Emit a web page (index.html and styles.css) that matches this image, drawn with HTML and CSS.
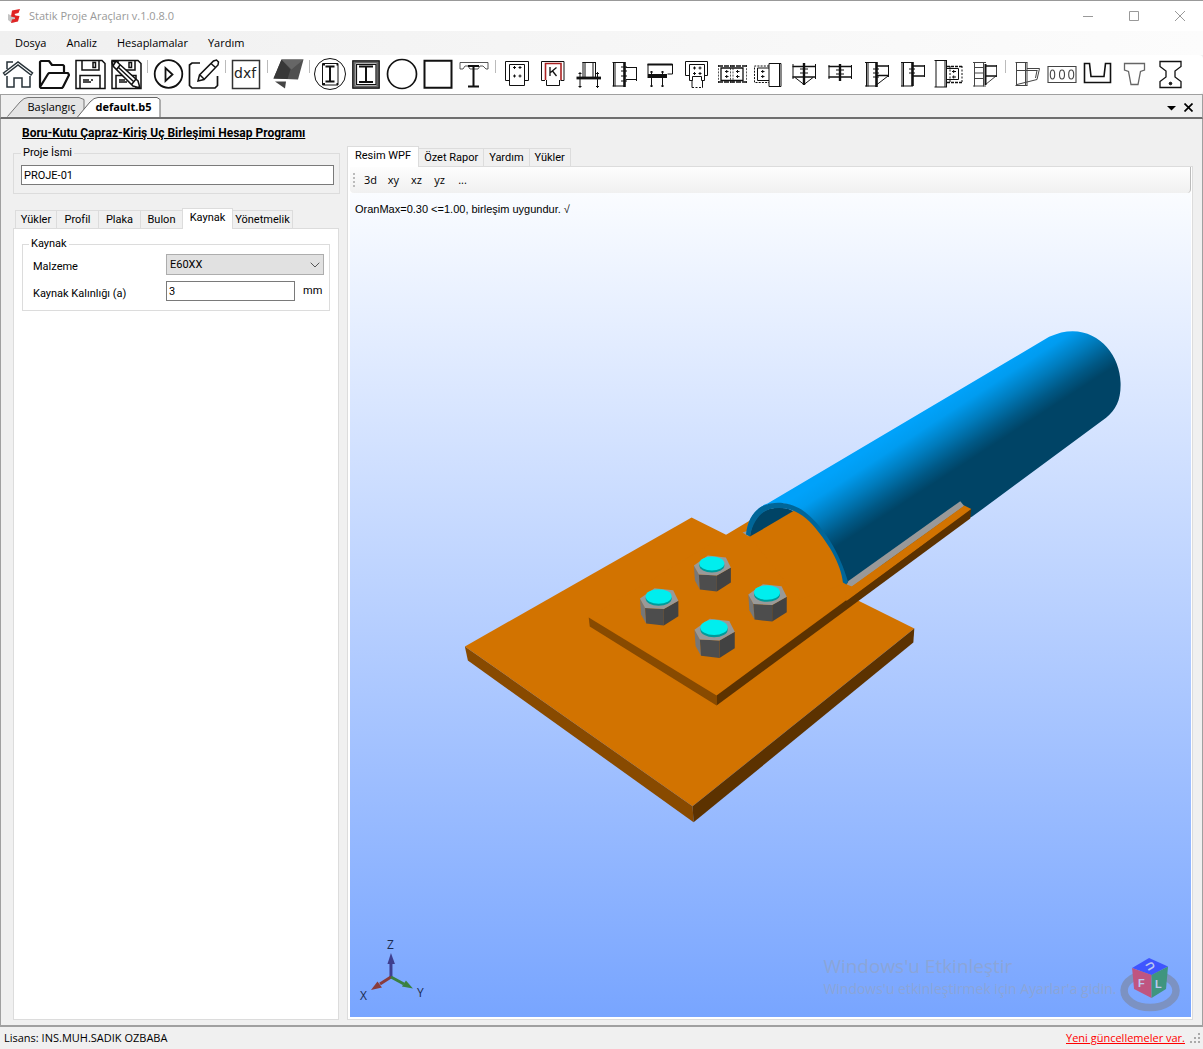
FILE: index.html
```
<!DOCTYPE html>
<html lang="tr">
<head>
<meta charset="utf-8">
<title>Statik Proje Araçları v.1.0.8.0</title>
<link rel="stylesheet" href="styles.css">
</head>
<body>
<div class="window">
  <header class="titlebar">
    <svg class="logo" width="16" height="16" viewBox="0 0 16 16"><path d="M2 6v6l4 3 3-1V9z" fill="#c4c4c4"/><path d="M6 2.500L14 1l-1.500 4-4 1 1 1.500 4 .5-1.500 5.500L5 15l1-3.500 3-.5v-1.500L5 8.500z" fill="#e02424"/></svg>
    <span class="caption">Statik Proje Araçları v.1.0.8.0</span>
    <button class="winbtn" aria-label="Simge durumuna küçült"><svg width="12" height="12" viewBox="0 0 12 12"><path d="M1 6.500h10"/></svg></button>
    <button class="winbtn" aria-label="Ekranı kapla"><svg width="12" height="12" viewBox="0 0 12 12"><path d="M1.500 1.500h9v9h-9z"/></svg></button>
    <button class="winbtn" aria-label="Kapat"><svg width="12" height="12" viewBox="0 0 12 12"><path d="M1 1l10 10M11 1L1 11"/></svg></button>
  </header>

  <nav class="menubar">
    <button>Dosya</button><button>Analiz</button><button>Hesaplamalar</button><button>Yardım</button>
  </nav>

  <div class="toolbar">
    <button aria-label="Ana sayfa"><svg viewBox="0 0 36 36"><g stroke="#273238" stroke-width="1.500"><path d="M3.500 17L18 6l14.500 11-1.500 2L18 9 5 19zM7 13V6h6M7 20v11h7v-9h8v9h8V20"/></g></svg></button>
    <button aria-label="Aç"><svg viewBox="0 0 36 36"><path stroke-width="2.200" stroke-linejoin="round" d="M4 31V6l1-1h8l3 4h11l1 1v7M4 31l8-13 1-1h19l1 2-6 12-1 1H5z"/></svg></button>
    <button aria-label="Kaydet"><svg viewBox="0 0 36 36"><path stroke-width="1.500" d="M4 4.500h26l3 3V32.500H4zM10 5v9h17V5M21 6.500h2.500v5H21zM8 32V19.500h20V32M11 24h6M19 24h2M11 26h8"/></svg></button>
    <button aria-label="Farklı kaydet"><svg viewBox="0 0 36 36"><path stroke-width="1.500" d="M4 4.500h26l3 3V32.500H4zM10 5v9h17V5M21 6.500h2.500v5H21zM8 32V19.500h20V32M11 24h6M11 26h8"/><path fill="#fff" stroke-width="1.500" d="M4 6l4-1 22 20 2 7-7-2L5 10zM8 5l-3 5M12 9l-3 4M28 23l-4 5M10 11l16 15M30 31l2 1"/></svg></button>
    <span class="sep"></span>
    <button aria-label="Hesapla"><svg viewBox="0 0 36 36"><circle cx="18.500" cy="18" r="13.800" stroke-width="1.800"/><path stroke-width="1.800" d="M15.500 12v13l7-6.500z"/></svg></button>
    <button aria-label="Düzenle"><svg viewBox="0 0 36 36"><path stroke-width="1.700" d="M14 7H6L3.500 9v20.500L6 32h23l2.500-2.500V20"/><path stroke-width="1.500" d="M12 25l1.500-6L27.500 5l3-1 2 2-.5 3L18 23.500zM25 7.500l4.500 4M14 19l4 4"/></svg></button>
    <span class="sep"></span>
    <button aria-label="DXF"><svg viewBox="0 0 36 36"><path stroke="#333" stroke-width="1.500" d="M4.500 4.500h27v28h-27z"/><text x="6" y="22" class="dxf">dxf</text></svg></button>
    <span class="sep"></span>
    <button aria-label="3B görünüm"><svg viewBox="0 0 36 36"><g stroke="none"><path fill="#505050" d="M11.500 3.500H33.500l-5.500 20-24.500-1z"/><path fill="#383838" d="M11.500 3.500l9 10-3 9.500-14-.5z"/><path fill="#666" d="M11.500 3.500H33.500l-12 10z"/><path fill="#444" d="M5 25.500h11l-1 7z"/></g></svg></button>
    <span class="sep"></span>
    <button aria-label="Daire kesitte I profil"><svg viewBox="0 0 36 36"><circle cx="18" cy="18" r="15.500"/><path d="M10.500 7.500h15.500v21.500H10.500z"/><path stroke-width="2" d="M13.500 10.500h9M18 10.500v15M13.500 25.500h9"/><path stroke-width="2" stroke-dasharray="2 11.500" d="M11 8.500h15M11 28h15"/></svg></button>
    <button aria-label="Kare kesitte I profil"><svg viewBox="0 0 36 36"><path stroke="#666" stroke-width="3" d="M6 6h24v25H6z"/><path stroke-width="1.200" d="M4.800 4.800h26.400v27.400H4.800zM8.500 8.500h19.500v20H8.500z"/><path stroke-width="2" d="M11 10.500h14M18 10.500v16M11 26h14"/></svg></button>
    <button aria-label="Daire kesit"><svg viewBox="0 0 36 36"><circle cx="18" cy="18" r="14.500" stroke-width="1.700"/></svg></button>
    <button aria-label="Kare kesit"><svg viewBox="0 0 36 36"><path stroke-width="2" d="M4.500 4.800h27v27h-27z"/></svg></button>
    <button aria-label="Kompozit kiriş"><svg viewBox="0 0 36 36"><path d="M4 13V6.500h28V13h-2l-3-3h-3l-2 3h-8l-2-3H9l-2 3z" stroke="#444" stroke-width=".9"/><path stroke-width="2" d="M12 10h11M17.500 9v21M12 30.500h11"/></svg></button>
    <span class="sep"></span>
    <button aria-label="Birleşim 1"><svg viewBox="0 0 36 36"><path d="M11 24.500H7.500V5.500H30.500v19H26.500"/><path d="M11.500 8.500h15v21h-15z"/><path class="b" d="M15 11.500h3M20.500 11.500h3M15 20h3M20.500 20h3M16.500 10v3M22 10v3M16.500 18.500v3M22 18.500v3"/></svg></button>
    <button aria-label="Birleşim 2"><svg viewBox="0 0 36 36"><path d="M11 24.500H7.500V5.500H30v19H26.500"/><path stroke="#a22" d="M11.500 24V7.500H27V24" stroke-width="1.600"/><path d="M12.500 24v5.500h13V24"/><path d="M16 11v9M22.500 11.500l-6 5M18.500 15l4 5" stroke-width="1.300"/></svg></button>
    <button aria-label="Kolon ayağı"><svg viewBox="0 0 36 36"><path d="M13 6v15M15 6v15M23 6v15M25.500 6v15M12.500 6.500h13M10 16v16M27.500 16v16M8.500 17.500h3M26 17.500h3M8.500 30.500h3M26 30.500h3"/><path stroke-width="2.800" d="M6.500 22h24.500"/></svg></button>
    <button aria-label="Kolon kiriş"><svg viewBox="0 0 36 36"><path d="M7.500 6.500v24M9 6.500v24M6.500 6.500h12M6.500 30h12M20 11.500h11M20 23.500h11M30.500 11v14M15 11h6M15 15h6M15 20h6M15 25h6"/><path stroke-width="2.600" d="M18.500 6v25"/></svg></button>
    <button aria-label="Kiriş mesnedi"><svg viewBox="0 0 36 36"><path d="M6 8v14M30.500 8v10h-5M9.500 15v16M20.500 15v16M8 16h3M19 16h3M8 30h3M19 30h3"/><path stroke-width="2" d="M5.500 8.500h25"/><path stroke-width="4" d="M6 20h19"/></svg></button>
    <button aria-label="Birleşim 3"><svg viewBox="0 0 36 36"><path d="M11 19.500H7.500V5.500H29.500v14H26.500M11.500 8.500h15v16h-3v-4h-9v4h-3zM14 24v7.500M24.500 24v7.500"/><path stroke-dasharray="2 1.500" d="M14 31.500h11"/><path class="b" d="M15 12h3M20.500 12h3M15 17.500h3M20.500 17.500h3M16.500 10.500v3M22 10.500v3M16.500 16v3M22 16v3"/></svg></button>
    <button aria-label="Birleşim 4"><svg viewBox="0 0 36 36"><g stroke-dasharray="2 1.200" stroke="#555"><path d="M4.500 9v18M32.500 9v18M16.500 9v18M19 9v18"/></g><path stroke-width="1.500" stroke-dasharray="5 1" d="M4 10h29M4 26h29"/><path stroke-width="1.300" d="M7 12h22v12.500H7z"/><path class="b" d="M11 15.500h3.500M22 15.500h3.500M11 20.500h3.500M22 20.500h3.500M12.700 14v3M23.500 14v3M12.700 19v3M23.500 19v3"/></svg></button>
    <button aria-label="Birleşim 5"><svg viewBox="0 0 36 36"><path stroke-dasharray="2 1.200" d="M19 10H4.500v16.500H19"/><path d="M19 12H7.500v12.500H19M19 7.500h12v23H19zM29.500 7.500v23"/><path class="b" d="M11 15.500h3.500M11 20.500h3.500M12.700 14v3M12.700 19v3"/></svg></button>
    <button aria-label="Kiriş eki 1"><svg viewBox="0 0 36 36"><path d="M7 8v15M29.500 8v15M9 21.500l9 7 9-7M14 13h8M14 17h8"/><path stroke-width="1.500" d="M6.500 10.500h23M6.500 21h23"/><path stroke-width="2.400" d="M18 7v22"/></svg></button>
    <button aria-label="Kiriş eki 2"><svg viewBox="0 0 36 36"><path d="M7 9v14M29.500 9v14M14 14h8M14 18h8"/><path stroke-width="1.500" d="M6.500 10.500h23M6.500 21h23"/><path stroke-width="2.400" d="M18 8v17"/></svg></button>
    <button aria-label="Kolon kiriş 2"><svg viewBox="0 0 36 36"><path d="M8.500 6.500v24M10 6.500v24M7 6.500h12M7 30h12M30.500 9v12M19 28.500L30 20M15 13h6M15 17h6M15 21h6"/><path stroke-width="1.500" d="M19 10h12M19 19.500h12"/><path stroke-width="2.600" d="M18.500 6v25"/></svg></button>
    <button aria-label="Kolon kiriş 3"><svg viewBox="0 0 36 36"><path d="M8 6.500v24M9.500 6.500v24M7 6.500h12M7 30h12M30.500 9v12M15 13h6M15 17h6"/><path stroke-width="1.500" d="M19 10h12M19 20h12"/><path stroke-width="2.600" d="M18.500 6v24"/></svg></button>
    <button aria-label="Kolon kiriş 4"><svg viewBox="0 0 36 36"><path d="M6 5v26M15 5v26M16.500 5v26M4.500 4.500h12.500M4.500 31h12.500M17 12.500h11.500v11H17"/><path stroke-width="1.500" stroke-dasharray="3 1" d="M17 10.500h15.500M17 26.500h15.500"/><path stroke-dasharray="2 1.500" d="M32 10v17M20 10v17"/><path class="b" d="M22 15.500h4M22 21h4M23.700 14v3M23.700 19.500v3"/></svg></button>
    <button aria-label="Kolon kiriş 5"><svg viewBox="0 0 36 36"><path stroke="#444" d="M8.500 6.500v24M17.500 6.500v24M7 6.500h13M7 30h13M8 11.500h10M8 17h10M8 22.500h10M30.500 9v12M19.500 28.500L30 20"/><path stroke-width="1.500" d="M19 10h12M19 20h12"/><path stroke-width="2" d="M19.500 8v21"/></svg></button>
    <span class="sep"></span>
    <button aria-label="Konsol"><svg viewBox="0 0 36 36"><g stroke="#444"><path d="M8.500 6.500v23M17.500 6.500v23M19 6.500v23M7.500 6.500h12M7.500 29.500h12M19 12.500h12.500L29 23.500 9 28.500M9 14.500h20.500M29 14.500l-1.500 7.500"/></g></svg></button>
    <button aria-label="Boşluklu döşeme"><svg viewBox="0 0 36 36"><g stroke="#444" stroke-width="1.100"><path d="M4 10.500h28v16H4z"/><ellipse cx="8.500" cy="18.500" rx="2.200" ry="4.500"/><ellipse cx="18" cy="18.500" rx="2.500" ry="4.500"/><ellipse cx="27.200" cy="18.500" rx="2.500" ry="4.500"/></g></svg></button>
    <button aria-label="U kesit"><svg viewBox="0 0 36 36"><path stroke-width="1.600" d="M4.500 26.500V7.500h5l1.500 13h13l1.500-13h5v19z"/></svg></button>
    <button aria-label="T kesit"><svg viewBox="0 0 36 36"><path stroke="#666" stroke-width="1.300" d="M8.500 7.500h20V14l-4 1.500-2.500 13h-7l-2.500-13-4-1.500z"/></svg></button>
    <button aria-label="I kesit"><svg viewBox="0 0 36 36"><path stroke-width="1.300" d="M8 5.500h21v5L23 15v6l6 4.500v6H8v-6L14 21v-6l-6-4.500z"/><circle cx="18.500" cy="27.500" r="1.300" fill="#111"/></svg></button>
  </div>

  <div class="doctabs">
    <button class="doctab"><svg viewBox="0 0 80 20" width="80" height="20"><path d="M.5 19.500L13 5q4-4.500 8-4.500h51l5 2v17" fill="#e4e4e4" stroke="#777"/></svg><span>Başlangıç</span></button>
    <button class="doctab current"><svg viewBox="0 0 84 20" width="84" height="20"><path d="M.5 20L13 5q4-4.500 8-4.500h59l3 2V20" fill="#fff" stroke="#666"/></svg><span>default.b5</span></button>
    <button class="docctl" aria-label="Sekme listesi"><svg width="9" height="9" viewBox="0 0 9 9"><path d="M0 3h9L4.500 7.500z"/></svg></button>
    <button class="docctl" aria-label="Sekmeyi kapat"><svg width="9" height="9" viewBox="0 0 9 9"><path d="M.5 .5l8 8M8.500 .5l-8 8" stroke="#000" stroke-width="1.700"/></svg></button>
  </div>

  <main class="content">
    <section class="side">
      <h1>Boru-Kutu Çapraz-Kiriş Uç Birleşimi Hesap Programı</h1>
      <fieldset class="group project">
        <legend><label for="proje">Proje İsmi</label></legend>
        <input id="proje" type="text" value="PROJE-01">
      </fieldset>
      <div class="tabs sidetabs">
        <button>Yükler</button><button>Profil</button><button>Plaka</button><button>Bulon</button><button class="on">Kaynak</button><button>Yönetmelik</button>
      </div>
      <div class="pane">
        <fieldset class="group weld">
          <legend>Kaynak</legend>
          <label for="malzeme">Malzeme</label>
          <div class="combo"><select id="malzeme"><option>E60XX</option><option>E70XX</option></select><svg width="10" height="6" viewBox="0 0 10 6"><path d="M.7 .7L5 5 9.300 .7"/></svg></div>
          <label for="kalinlik">Kaynak Kalınlığı (a)</label>
          <div class="measure"><input id="kalinlik" type="text" value="3"><span>mm</span></div>
        </fieldset>
      </div>
    </section>

    <section class="work">
      <div class="tabs worktabs">
        <button class="on">Resim WPF</button><button>Özet Rapor</button><button>Yardım</button><button>Yükler</button>
      </div>
      <div class="viewer">
        <div class="strip"><i class="grip"></i><button>3d</button><button>xy</button><button>xz</button><button>yz</button><button>...</button></div>
        <div class="stage">
          <p class="result">OranMax=0.30 &lt;=1.00, birleşim uygundur. √</p>
          <svg class="scene" viewBox="351 193 840 825" preserveAspectRatio="xMidYMid meet">
            <defs>
              <linearGradient id="pipe" gradientUnits="userSpaceOnUse" x1="896" y1="432" x2="931" y2="486">
                <stop offset="0" stop-color="#00a2fa"/><stop offset=".2" stop-color="#009cf0"/><stop offset=".5" stop-color="#007cbd"/><stop offset=".8" stop-color="#005885"/><stop offset="1" stop-color="#004466"/>
              </linearGradient>
              <g id="nut">
                <path d="M-18 2l1 15 5 9-1-15z" fill="#777"/><path d="M-13 11l1 15 17 2V12z" fill="#4d4d4d"/><path d="M5 12v16l14-9V4z" fill="#424242"/>
                <path d="M-4-8l18 2 5 10-14 8-18-1-5-9z" fill="#999"/><ellipse cy="2" rx="12.500" ry="7" fill="#009a9a"/><ellipse rx="12.500" ry="7" fill="#00eeee"/>
              </g>
            </defs>
            <path fill="#d27300" d="M465 647L692 518l223 111-222 178z"/>
            <path fill="#884a00" d="M465 647l3 14 226 162-1-16z"/>
            <path fill="#5c3200" d="M693 807l1 16 220-180 1-14z"/>
            <path fill="#d27300" d="M589 618l138-83 25-15 208-10 12-1-255 187z"/>
            <path fill="#884a00" d="M589 618l1 9 127 79v-10z"/>
            <path fill="#999" d="M743 533l6-2v6z"/>
            <path fill="url(#pipe)" d="M747 535C748 518 758 507 768 504L1050 337C1090 318 1121 350 1121.500 383C1122 400 1117 410 1107 418L973 517 848 584C838 555 823 530 810 517C793 503 780 502 768 505z"/>
            <path fill="#d27300" d="M750 537L797 509C818 520 838 550 846 584L800 600z"/>
            <path fill="#004466" d="M750.500 537C752 522 760 512 770 509.500Q783 506 794 511.500z"/>
            <path fill="#006699" d="M746.500 535C748 518 757 508 766 505.500C776 501 791 503 802 510C824 525 841 555 848.500 582L847 585 843.500 583C842 565 828 541 810 522C799 511 785 506 771 509.500C761 512 753 522 750.500 537z"/>
            <path fill="#5c3200" d="M717 696v10l254-187 1-10z"/>
            <path fill="#999" d="M849 581.500L961 501.500l4 5-112.500 80.500-5-2z"/>
            <path fill="#d27300" d="M845 588l7.500-1L965 506l7 3.500-125 92z"/>
            <use href="#nut" transform="translate(712.300 564)"/>
            <use href="#nut" transform="translate(659 597) scale(1.040)"/>
            <use href="#nut" transform="translate(767.500 593) scale(1.040)"/>
            <use href="#nut" transform="translate(714.500 628) scale(1.090)"/>
            <g class="axes">
              <path d="M391 978v-14" stroke="#3f3f8f" stroke-width="3"/><path d="M387.500 965h7.500L391 954z" fill="#3f3f8f"/>
              <path d="M391 978l-11 7" stroke="#8a3c3c" stroke-width="3"/><path d="M371 991l6.500-8.500 4.500 6z" fill="#8a3c3c"/>
              <path d="M391 978l13 7" stroke="#3a8040" stroke-width="3"/><path d="M413 989.500l-7-8-4 6z" fill="#3a8040"/>
              <text x="387" y="950">Z</text><text x="360" y="1001">X</text><text x="417" y="998">Y</text>
            </g>
            <g class="watermark"><text x="824" y="974" class="big">Windows'u Etkinleştir</text><text x="824" y="995" class="small">Windows'u etkinleştirmek için Ayarlar'a gidin.</text></g>
            <ellipse cx="1151" cy="991.500" rx="26" ry="17" fill="none" stroke="#7c92c2" stroke-width="7.500"/>
            <path fill="#3f55ff" d="M1150 959l19 8.500-16.500 8.500-19.500-7z"/>
            <path fill="#bf5580" d="M1133 969l19.500 7v23l-17.500-9z"/>
            <path fill="#3f957f" d="M1152.500 976l16.500-8.500-2 22.500-14.500 9z"/>
            <g class="cube"><text x="1139" y="988">F</text><text x="1156" y="989">L</text><text x="-4" y="4" transform="translate(1151 967) rotate(240)">U</text></g>
          </svg>
        </div>
      </div>
    </section>
  </main>

  <footer class="status">
    <span>Lisans: INS.MUH.SADIK OZBABA</span>
    <a href="#">Yeni güncellemeler var.</a>
    <svg width="12" height="12" viewBox="0 0 12 12"><path fill="#aaa" d="M9 1h2v2H9zM5 5h2v2H5zM9 5h2v2H9zM1 9h2v2H1zM5 9h2v2H5zM9 9h2v2H9z"/></svg>
  </footer>
</div>
</body>
</html>
```
FILE: styles.css
```
* { box-sizing: border-box; }
body { margin: 0; color: #000; background: #f0f0f0; font: 11px/14px Roboto, "Liberation Sans", sans-serif; }
button { margin: 0; padding: 0; border: 0; background: none; color: inherit; font: inherit; white-space: nowrap; }
input, select { font: inherit; color: #000; border-radius: 0; }
svg { display: block; fill: none; }

.window { display: flex; flex-direction: column; min-height: 100vh; border-top: 1px solid #999; }

.titlebar, .menubar, .doctabs, .strip, .status { font: 11px/16px "Open Sans", "Noto Sans", sans-serif; }

.titlebar { display: flex; align-items: center; height: 30px; background: #fff; color: #999; padding-left: 6px; }
.logo { margin-right: 7px; }
.caption { flex: 1; }
.winbtn { width: 46px; height: 30px; display: grid; place-items: center; }
.winbtn svg { stroke: #999; }

.menubar { display: flex; height: 24px; padding-left: 5px; background: linear-gradient(to right, #f0f0f0, #fcfcfc); }
.menubar button { padding: 0 10px; }

.toolbar { display: flex; height: 39px; padding-top: 1px; background: #fff; border-radius: 0 4px 4px 0; }
.toolbar button { width: 36px; height: 36px; flex: none; }
.toolbar svg { width: 36px; height: 36px; stroke: #111; }
.toolbar .b { stroke-width: 1px; }
.toolbar .dxf { font: 14px "DejaVu Sans", sans-serif; fill: #222; stroke: none; }
.sep { width: 6px; height: 13px; margin-top: 4px; flex: none; background: linear-gradient(#bbb, #bbb) 3px 0 / 1px 100% no-repeat; }

.doctabs { display: flex; align-items: flex-end; height: 25px; padding: 0 5px 0 6px; border: 1px solid #a0a0a0; border-bottom: 2px solid #6f6f6f; }
.doctab { position: relative; height: 20px; width: 80px; margin-right: -10px; }
.doctab svg { position: absolute; left: 0; top: 0; }
.doctab span { position: relative; padding-left: 9px; }
.doctab.current { width: 84px; font-weight: 700; }
.docctl { display: grid; place-items: center; width: 17px; height: 20px; }
.doctab.current + .docctl { margin-left: auto; }
.docctl path { fill: #000; }

.content { flex: 1; display: grid; grid-template-columns: 327px 1fr; gap: 7px; padding: 7px 9px 5px 12px; border: 1px solid #a0a0a0; border-top: 0; border-bottom-width: 2px; }
.side, .work { display: flex; flex-direction: column; min-width: 0; }
h1 { margin: 0 0 0 9px; font: 700 12px/14px Roboto, "Liberation Sans", sans-serif; text-decoration: underline; white-space: nowrap; }

.group { margin: 0; border: 1px solid #dcdcdc; min-width: 0; }
.group legend { padding: 0 2px; line-height: 14px; }
.project { margin-top: 6px; padding: 5px 5px 8px 7px; }
.group input { height: 20px; padding: 0 2px; border: 1px solid #7a7a7a; background: #fff; display: block; width: 100%; }

.tabs { display: flex; align-items: flex-end; height: 20px; }
.tabs button { height: 18px; border: 1px solid #dcdcdc; border-bottom: 0; border-left-width: 0; background: #f0f0f0; text-align: center; }
.tabs button:first-child { border-left-width: 1px; }
.tabs .on { height: 21px; background: #fff; margin-bottom: -1px; padding-bottom: 2px; position: relative; border-left-width: 1px; }
.sidetabs { margin-top: 14px; padding-left: 2px; }
.sidetabs button { width: 42px; }
.sidetabs .on { width: 51px; margin-left: -1px; }
.sidetabs button:last-child { width: 60px; }
.pane { flex: 1; margin-right: 1px; border: 1px solid #dcdcdc; background: #fff; padding: 8px; }
.weld { display: grid; grid-template-columns: 133px 158px; align-items: center; row-gap: 6px; padding: 3px 5px 9px 10px; }
.weld legend { margin-left: -4px; }
.weld label { padding-top: 5px; }
.combo { position: relative; }
.combo select { appearance: none; width: 100%; height: 21px; padding: 0 3px; border: 1px solid #adadad; background: #e1e1e1; display: block; }
.combo svg { position: absolute; right: 4px; top: 8px; stroke: #555; }
.measure { display: flex; align-items: center; gap: 8px; }
.measure input { width: 129px; }

.work { padding-top: 20px; }
.worktabs button { padding: 0 5px; }
.worktabs .on { padding: 0 7px 2px; }
.viewer { flex: 1; display: flex; flex-direction: column; border: 1px solid #dcdcdc; background: #fff; padding: 0 1px 2px 2px; }
.strip { display: flex; align-items: center; height: 26px; background: linear-gradient(#fdfdfd, #f0f0f0); border-right: 1px solid #bbb; border-radius: 0 0 4px 4px; padding-left: 3px; }
.strip button { width: 23px; }
.grip { width: 2px; height: 14px; margin-right: 4px; background: repeating-linear-gradient(#bbb 0 2px, transparent 2px 4px); }
.stage { flex: 1; min-height: 300px; contain: size; position: relative; display: flex; background: linear-gradient(#fafcff, #78a5ff); }
.result { position: absolute; left: 5px; top: 9px; margin: 0; font-family: "Liberation Sans", Arial, sans-serif; }
.scene { width: 100%; height: 100%; }
.axes text { font: 12px "Open Sans", "Noto Sans", sans-serif; fill: #1c2c50; }
.watermark { font-family: "Open Sans", "Noto Sans", sans-serif; fill: #8ba5d8; }
.watermark .big { font-size: 19px; }
.watermark .small { font-size: 14px; }
.cube text { font: 700 11px "Liberation Sans", Arial, sans-serif; fill: #bcc8f0; }

.status { display: flex; align-items: center; height: 22px; padding: 0 2px 0 4px; }
.status a { margin-left: auto; margin-right: 4px; color: #f00; }
```
